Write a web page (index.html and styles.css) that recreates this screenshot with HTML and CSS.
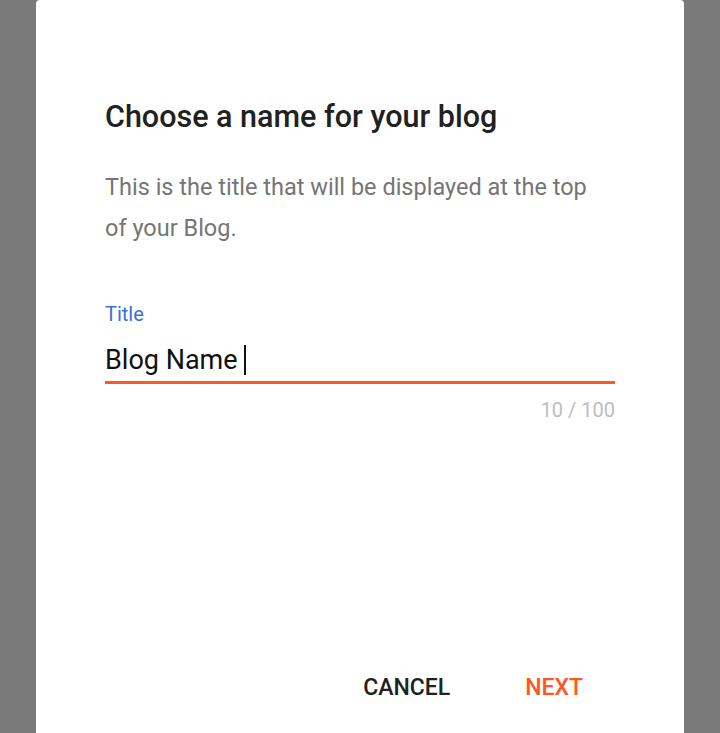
FILE: index.html
```html
<!DOCTYPE html>
<html>
<head>
<meta charset="utf-8">
<link rel="stylesheet" href="styles.css">
</head>
<body>
<div class="dialog">
  <h1 class="title">Choose a name for your blog</h1>
  <p class="desc">This is the title that will be displayed at the top of your Blog.</p>
  <div class="field">
    <div class="label">Title</div>
    <div class="input"><span class="value">Blog Name</span><span class="caret"></span></div>
    <div class="counter">10 / 100</div>
  </div>
  <div class="actions">
    <span class="btn cancel">CANCEL</span>
    <span class="btn next">NEXT</span>
  </div>
</div>
</body>
</html>
```
FILE: styles.css
```css
html, body {
  margin: 0;
  padding: 0;
  height: 100%;
}
body {
  background: #7a7a7a;
  font-family: Roboto, "Liberation Sans", sans-serif;
  overflow: hidden;
}
.dialog {
  box-sizing: border-box;
  margin-left: 36px;
  width: 648px;
  height: 733px;
  background: #fff;
  border-radius: 4px 4px 0 0;
  padding: 97px 69px 0 69px;
  display: flex;
  flex-direction: column;
}
.title {
  margin: 0;
  font-size: 30.5px;
  font-weight: 500;
  color: #212121;
  line-height: 40px;
}
.desc {
  margin: 30px 0 0 0;
  width: 500px;
  font-size: 23.5px;
  line-height: 41px;
  color: #757575;
}
.field {
  margin-top: 53px;
}
.label {
  font-size: 20px;
  color: #3b6fd9;
  line-height: 24px;
}
.input {
  display: flex;
  align-items: center;
  height: 42px;
  border-bottom: 3px solid #ff5722;
  margin-top: 13px;
}
.value {
  font-size: 27px;
  color: #111;
}
.caret {
  display: inline-block;
  width: 2px;
  height: 30px;
  background: #111;
  margin-left: 6px;
}
.counter {
  text-align: right;
  font-size: 20px;
  color: #bdbdbd;
  margin-top: 14px;
}
.actions {
  margin-top: auto;
  margin-bottom: 31px;
  display: flex;
  justify-content: flex-end;
  gap: 75px;
  padding-right: 32px;
}
.btn {
  font-size: 23px;
  font-weight: 500;
  line-height: 28px;
}
.cancel { color: #212121; }
.next { color: #ff5722; }
```
